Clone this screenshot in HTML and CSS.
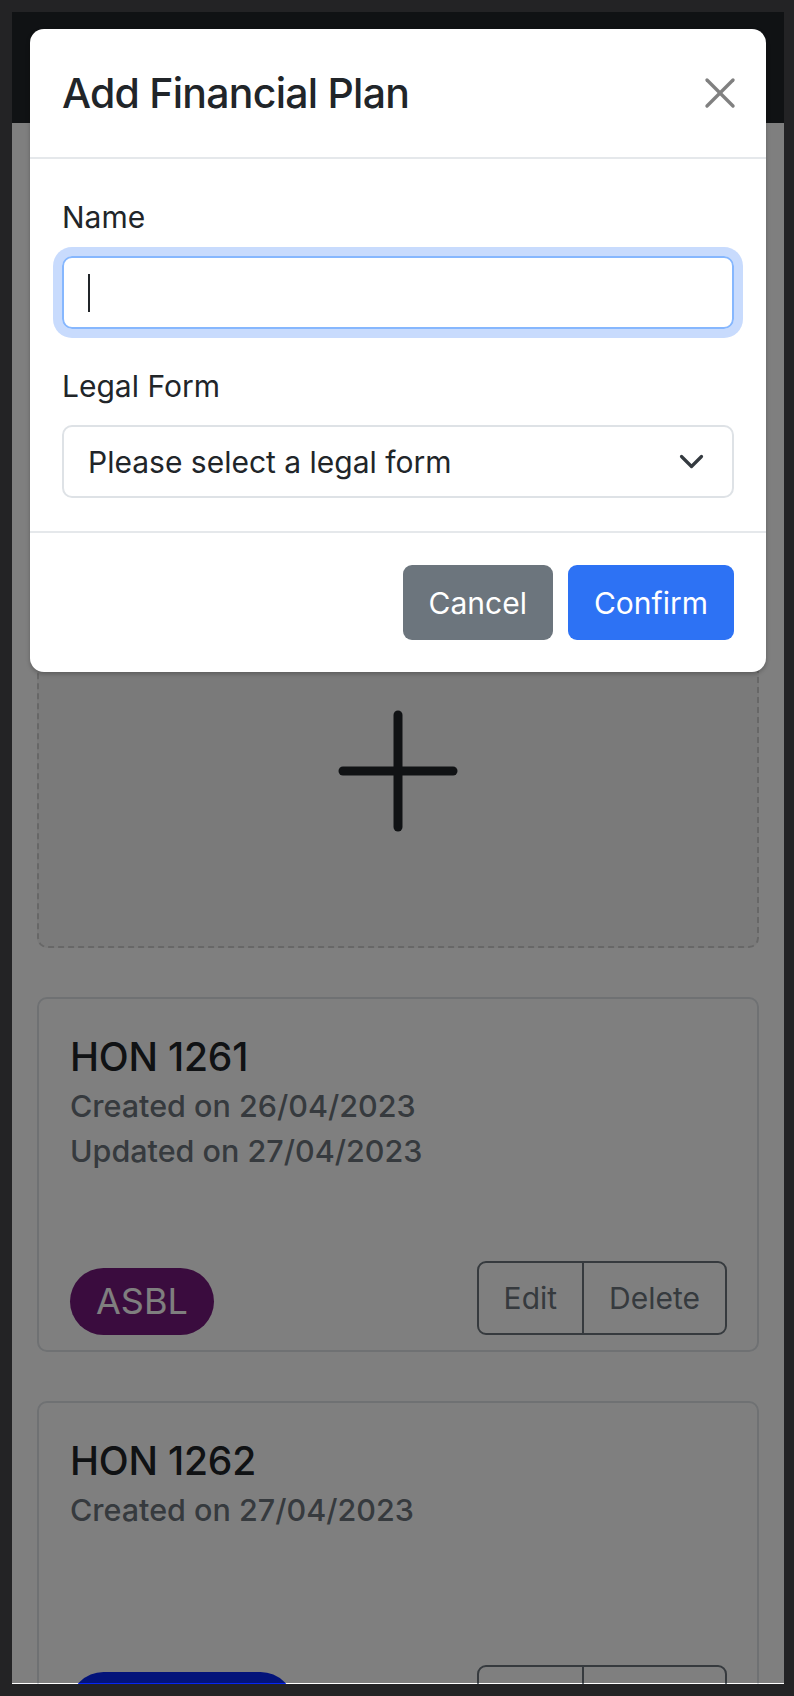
FILE: index.html
```html
<!DOCTYPE html>
<html lang="en">
<head>
<meta charset="utf-8">
<title>Add Financial Plan</title>
<link rel="stylesheet" href="styles.css">
</head>
<body>
<div class="frame">
  <div class="viewport">
    <nav class="navbar"></nav>
    <main class="content">
      <div class="add-card">
        <svg class="plus" width="120" height="122" viewBox="0 0 120 122">
          <line x1="60" y1="5" x2="60" y2="117" stroke="#212529" stroke-width="9" stroke-linecap="round"/>
          <line x1="5" y1="61" x2="115" y2="61" stroke="#212529" stroke-width="9" stroke-linecap="round"/>
        </svg>
      </div>
      <div class="plan-card">
        <h5 class="plan-title">HON 1261</h5>
        <p class="plan-meta">Created on 26/04/2023<br>Updated on 27/04/2023</p>
        <div class="plan-footer">
          <span class="badge badge-purple">ASBL</span>
          <div class="btn-group"><span class="btn-part">Edit</span><span class="btn-part">Delete</span></div>
        </div>
      </div>
      <div class="plan-card">
        <h5 class="plan-title">HON 1262</h5>
        <p class="plan-meta">Created on 27/04/2023</p>
        <div class="plan-footer">
          <span class="badge badge-blue">Particulier</span>
          <div class="btn-group"><span class="btn-part">Edit</span><span class="btn-part">Delete</span></div>
        </div>
      </div>
    </main>
    <div class="backdrop"></div>
    <div class="modal">
      <div class="modal-header">
        <h5 class="modal-title">Add Financial Plan</h5>
        <svg class="close" width="32" height="32" viewBox="0 0 32 32">
          <line x1="3" y1="3" x2="29" y2="29" stroke="#808080" stroke-width="3.4" stroke-linecap="round"/>
          <line x1="29" y1="3" x2="3" y2="29" stroke="#808080" stroke-width="3.4" stroke-linecap="round"/>
        </svg>
      </div>
      <div class="modal-body">
        <div class="field">
          <label class="label">Name</label>
          <div class="input focused"><span class="caret"></span></div>
        </div>
        <div class="field">
          <label class="label">Legal Form</label>
          <div class="input select">
            <span>Please select a legal form</span>
            <svg width="25" height="15" viewBox="0 0 25 15">
              <polyline points="2.5,2.5 12.5,12.5 22.5,2.5" fill="none" stroke="#343a40" stroke-width="3.2" stroke-linecap="round" stroke-linejoin="round"/>
            </svg>
          </div>
        </div>
      </div>
      <div class="modal-footer">
        <button class="btn btn-secondary">Cancel</button>
        <button class="btn btn-primary">Confirm</button>
      </div>
    </div>
  </div>
</div>
</body>
</html>
```
FILE: styles.css
```css
* { box-sizing: border-box; }
body {
  margin: 0;
  background: #232325;
  font-family: Inter, "Noto Sans", sans-serif;
  color: #212529;
}
.frame { padding: 12px 10px 12px 12px; }
.viewport {
  position: relative;
  width: 772px;
  height: 1672px;
  overflow: hidden;
  background: #fff;
}
.navbar { height: 111px; background: #212529; }
.content {
  display: flex;
  flex-direction: column;
  gap: 49px;
  padding: 470px 25px 0;
}
.add-card {
  height: 355px;
  border: 2px dashed #cfcfcf;
  border-radius: 10px;
  background: #f4f4f4;
  display: flex;
  align-items: center;
  justify-content: center;
}
.plan-card {
  height: 355px;
  flex-shrink: 0;
  border: 2px solid #dee2e6;
  border-radius: 10px;
  padding: 34px 30px 15px 31px;
  display: flex;
  flex-direction: column;
}
.plan-title {
  margin: 0;
  font-size: 39px;
  font-weight: 500;
  line-height: 47px;
  letter-spacing: -0.2px;
  color: #212529;
}
.plan-meta {
  margin: 3px 0 0;
  font-size: 30.5px;
  font-weight: 500;
  line-height: 45px;
  color: #6c757d;
}
.plan-footer {
  margin-top: auto;
  display: flex;
  justify-content: space-between;
  align-items: flex-end;
}
.badge {
  height: 67px;
  padding: 0 26px;
  border-radius: 34px;
  font-size: 36px;
  line-height: 67px;
  color: #fff;
}
.badge-purple { background: #74187c; }
.badge-blue { background: #0626f4; }
.btn-group {
  display: flex;
  height: 74px;
  border: 2px solid #6c757d;
  border-radius: 9px;
}
.btn-part {
  padding: 0 25px;
  font-size: 30px;
  line-height: 70px;
  color: #6c757d;
}
.btn-part + .btn-part { border-left: 2px solid #6c757d; }

.backdrop {
  position: absolute;
  top: 0; left: 0; right: 0; bottom: 1px;
  background: rgba(0, 0, 0, 0.5);
}
.modal {
  position: absolute;
  top: 17px;
  left: 18px;
  width: 736px;
  background: #fff;
  border-radius: 14px;
  box-shadow: 0 2px 4px rgba(0, 0, 0, 0.25);
}
.modal-header {
  height: 130px;
  border-bottom: 2px solid #e5e8eb;
  display: flex;
  align-items: center;
  justify-content: space-between;
  padding: 0 30px 0 32px;
}
.modal-title {
  margin: 0;
  font-size: 41px;
  font-weight: 500;
  letter-spacing: -0.75px;
  color: #212529;
}
.modal-body { padding: 36px 32px 33px; }
.field + .field { margin-top: 35px; }
.label {
  display: block;
  font-size: 30px;
  line-height: 44px;
  margin-bottom: 17px;
}
.input {
  height: 73px;
  border: 2px solid #dee2e6;
  border-radius: 10px;
  display: flex;
  align-items: center;
  padding: 0 28px 0 24px;
}
.input.focused {
  border-color: #86b7fe;
  box-shadow: 0 0 0 9px #c8dbfd;
}
.caret { width: 2px; height: 38px; background: #212529; }
.select {
  justify-content: space-between;
  font-size: 30px;
  color: #212529;
}
.modal-footer {
  border-top: 2px solid #e5e8eb;
  padding: 32px;
  display: flex;
  justify-content: flex-end;
  gap: 15px;
}
.btn {
  height: 75px;
  border: none;
  border-radius: 9px;
  padding: 0 26px;
  font-family: Inter, "Noto Sans", sans-serif;
  font-size: 30px;
  color: #fff;
}
.btn-secondary { background: #6c757d; }
.btn-primary { background: #2d72f4; }
```
